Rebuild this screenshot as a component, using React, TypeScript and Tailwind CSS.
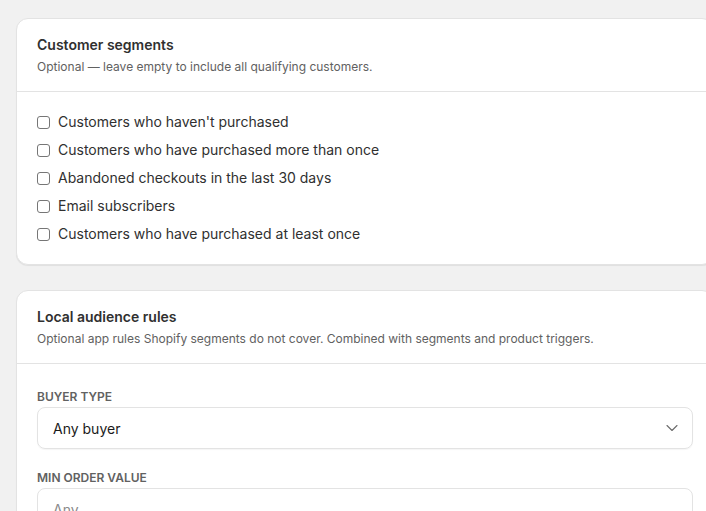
import { ChevronDown } from "lucide-react";

const segments = [
  "Customers who haven't purchased",
  "Customers who have purchased more than once",
  "Abandoned checkouts in the last 30 days",
  "Email subscribers",
  "Customers who have purchased at least once",
];

function CardHeader({ title, subtitle }: { title: string; subtitle: string }) {
  return (
    <div className="px-5 pt-4 pb-4 border-b border-[#e3e3e3]">
      <h2 className="text-[14px] leading-5 font-semibold text-[#303030]">{title}</h2>
      <p className="mt-1 text-[12px] leading-4 text-[#616161]">{subtitle}</p>
    </div>
  );
}

export default function App() {
  return (
    <div
      className="w-[706px] h-[511px] overflow-hidden bg-[#f1f1f1] pt-[18px] pl-4"
      style={{ fontFamily: "Inter, 'Noto Sans', sans-serif" }}
    >
      <div className="w-[698px] flex flex-col gap-[25px]">
        <div className="bg-white rounded-xl border border-[#e3e3e3] shadow-[0_1px_1px_rgba(0,0,0,0.07)]">
          <CardHeader
            title="Customer segments"
            subtitle="Optional — leave empty to include all qualifying customers."
          />
          <div className="px-5 py-5 flex flex-col gap-2">
            {segments.map((s) => (
              <label key={s} className="flex items-center gap-2 text-[14px] leading-5 text-[#303030]">
                <span className="w-[13px] h-[13px] rounded-[3px] border border-[#767676] bg-white shrink-0" />
                {s}
              </label>
            ))}
          </div>
        </div>

        <div className="bg-white rounded-xl border border-[#e3e3e3] shadow-[0_1px_1px_rgba(0,0,0,0.07)]">
          <CardHeader
            title="Local audience rules"
            subtitle="Optional app rules Shopify segments do not cover. Combined with segments and product triggers."
          />
          <div className="px-5 pt-[25px] pb-5 flex flex-col">
            <div className="text-[12px] leading-4 font-semibold uppercase text-[#616161] mb-[2px]">Buyer type</div>
            <div className="h-[42px] rounded-lg border border-[#e3e3e3] flex items-center justify-between pl-[15px] pr-[10px] shadow-[0_1px_1px_rgba(0,0,0,0.04)]">
              <span className="text-[14px] text-[#1a1a1a]">Any buyer</span>
              <ChevronDown className="w-5 h-5 text-[#6b6b6b]" strokeWidth={1.3} />
            </div>
            <div className="mt-[21px] text-[12px] leading-4 font-semibold uppercase text-[#616161] mb-[2px]">Min order value</div>
            <div className="h-[42px] rounded-lg border border-[#e3e3e3] flex items-center pl-[15px]">
              <span className="text-[14px] text-[#8a8a8a]">Any</span>
            </div>
          </div>
        </div>
      </div>
    </div>
  );
}
